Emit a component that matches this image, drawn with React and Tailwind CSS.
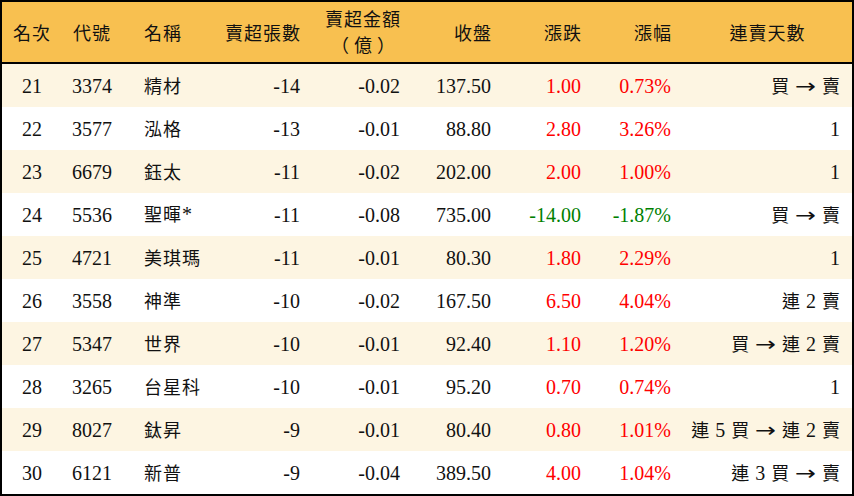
import React from "react";

const rows = [
  ["21", "3374", "精材", "-14", "-0.02", "137.50", "1.00", "0.73%", "買 → 賣", "up"],
  ["22", "3577", "泓格", "-13", "-0.01", "88.80", "2.80", "3.26%", "1", "up"],
  ["23", "6679", "鈺太", "-11", "-0.02", "202.00", "2.00", "1.00%", "1", "up"],
  ["24", "5536", "聖暉*", "-11", "-0.08", "735.00", "-14.00", "-1.87%", "買 → 賣", "down"],
  ["25", "4721", "美琪瑪", "-11", "-0.01", "80.30", "1.80", "2.29%", "1", "up"],
  ["26", "3558", "神準", "-10", "-0.02", "167.50", "6.50", "4.04%", "連 2 賣", "up"],
  ["27", "5347", "世界", "-10", "-0.01", "92.40", "1.10", "1.20%", "買 → 連 2 賣", "up"],
  ["28", "3265", "台星科", "-10", "-0.01", "95.20", "0.70", "0.74%", "1", "up"],
  ["29", "8027", "鈦昇", "-9", "-0.01", "80.40", "0.80", "1.01%", "連 5 買 → 連 2 賣", "up"],
  ["30", "6121", "新普", "-9", "-0.04", "389.50", "4.00", "1.04%", "連 3 買 → 賣", "up"],
];

const cols = "grid grid-cols-[60px_60px_80px_110px_100px_91px_90px_90px_1fr]";
const cjk = "font-['Noto_Sans_CJK_TC',sans-serif] text-[18px] tracking-[1px]";

function Days({ text }) {
  const parts = text.split(" ");
  return (
    <div className="flex justify-end items-center gap-[6px] pr-[12px] whitespace-nowrap">
      {parts.map((p, i) => {
        if (/^[0-9]+$/.test(p)) return <span key={i}>{p}</span>;
        if (p === "→")
          return (
            <span key={i} className="font-['DejaVu_Sans',sans-serif] text-[20px] scale-x-125 inline-block px-[2px]">
              →
            </span>
          );
        return (
          <span key={i} className="font-['Noto_Sans_CJK_TC',sans-serif] text-[18px] -translate-y-[1px] inline-block">
            {p}
          </span>
        );
      })}
    </div>
  );
}

export default function App() {
  return (
    <div
      className="w-[854px] h-[496px] border-2 border-black bg-white text-[20px] text-[#111] overflow-hidden"
      style={{ fontFamily: "'Liberation Serif', 'Noto Sans CJK TC', serif" }}
    >
      <div className={`${cols} h-[62px] bg-[#F8C050] border-b-2 border-black items-center leading-none ${cjk}`}>
        <div className="text-center">名次</div>
        <div className="text-center">代號</div>
        <div className="pl-[22px]">名稱</div>
        <div className="text-right pr-[11px]">賣超張數</div>
        <div className="flex flex-col items-end pr-[11px] -mt-[2px]">
          <div className="leading-[26px]">賣超金額</div>
          <div className="w-[76px] text-center leading-[26px] tracking-[5px] pl-[5px]">（億）</div>
        </div>
        <div className="text-right pr-[11px]">收盤</div>
        <div className="text-right pr-[11px]">漲跌</div>
        <div className="text-right pr-[11px]">漲幅</div>
        <div className="text-center">連賣天數</div>
      </div>
      {rows.map((r, i) => {
        const color = r[9] === "down" ? "text-[#008000]" : "text-[#FF0000]";
        return (
          <div
            key={r[0]}
            className={`${cols} h-[43px] items-center leading-none ${i % 2 === 0 ? "bg-[#FDF5E2]" : "bg-white"}`}
          >
            <div className="text-center">{r[0]}</div>
            <div className="text-center">{r[1]}</div>
            <div className={`pl-[22px] whitespace-nowrap -translate-y-[1px] ${cjk}`}>
              {r[2].replace("*", "")}
              {r[2].includes("*") && <span className="font-['Liberation_Serif',serif] text-[20px]">*</span>}
            </div>
            <div className="text-right pr-[12px]">{r[3]}</div>
            <div className="text-right pr-[12px]">{r[4]}</div>
            <div className="text-right pr-[12px]">{r[5]}</div>
            <div className={`text-right pr-[12px] ${color}`}>{r[6]}</div>
            <div className={`text-right pr-[12px] ${color}`}>{r[7]}</div>
            <Days text={r[8]} />
          </div>
        );
      })}
    </div>
  );
}
